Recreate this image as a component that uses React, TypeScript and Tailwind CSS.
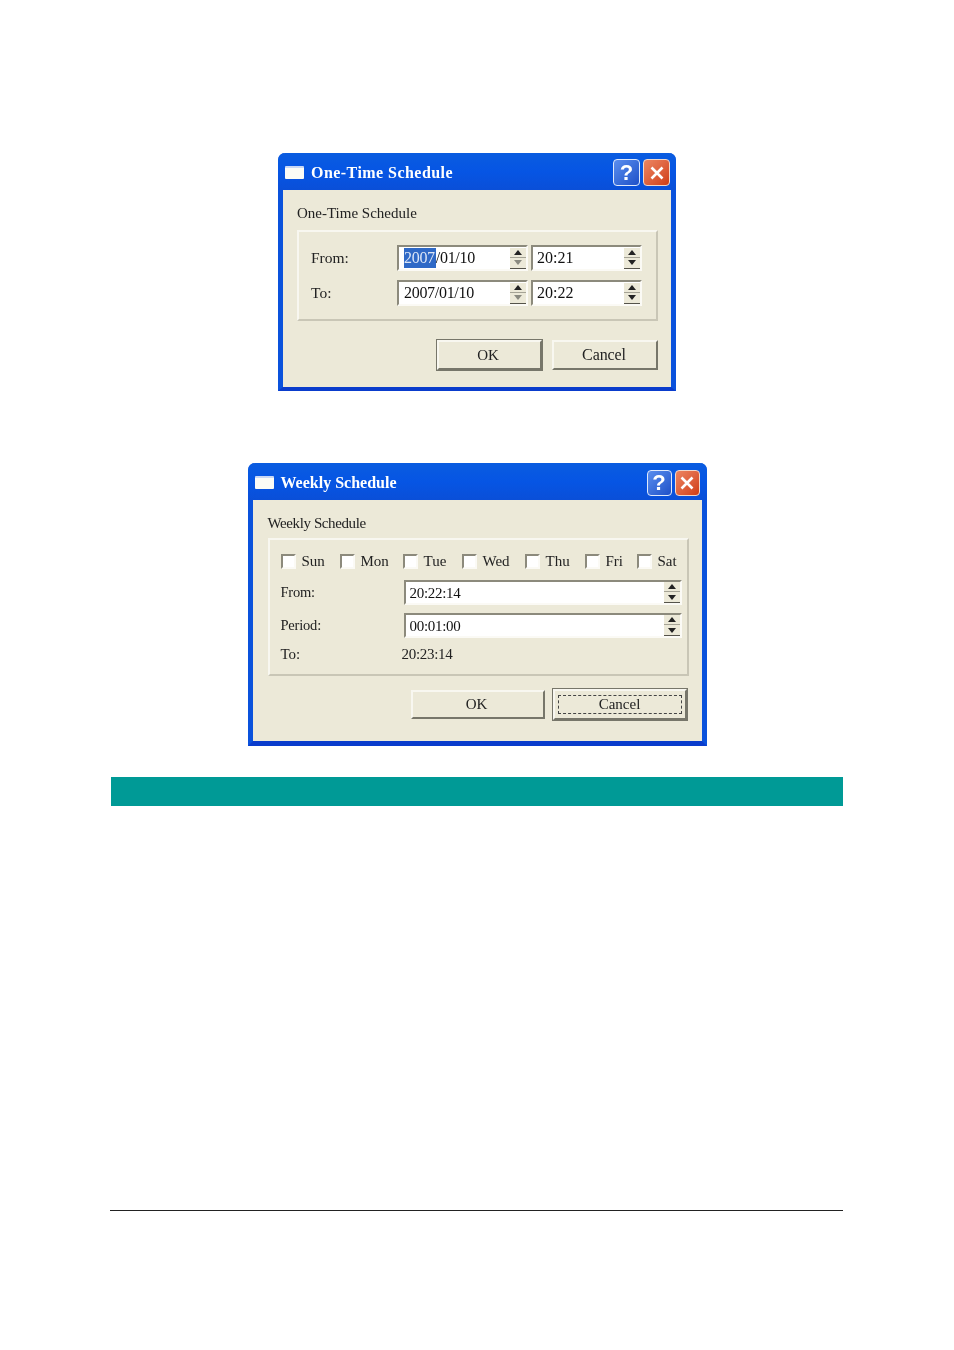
const serif = "font-['Liberation_Serif','Noto_Serif',serif]";

function TitleBar({
  title,
  iconGap,
  titleClass,
  buttonClass,
  barClass,
}: {
  title: string;
  iconGap: string;
  titleClass: string;
  buttonClass: string;
  barClass: string;
}) {
  return (
    <div className={`flex h-[37px] shrink-0 items-center rounded-t-[7px] bg-gradient-to-b from-[#0a5ce0] via-[#0655e4] to-[#0a4fd8] pl-[7px] pt-[2px] ${barClass}`}>
      <div className={`h-[13px] w-[19px] rounded-[1px] border-t-2 border-[#c9d8f5] bg-[#fbfbf6] ${iconGap}`} />
      <span className={`${serif} text-[16px] font-bold text-white ${titleClass}`}>{title}</span>
      <div className="ml-auto flex gap-[3px]">
        <div className={`flex items-center justify-center rounded-[4px] border border-[#dfe9fb] bg-gradient-to-br from-[#5b8eee] to-[#1f50c8] font-['Liberation_Sans',sans-serif] text-[22px] font-bold leading-none text-white ${buttonClass}`}>
          ?
        </div>
        <div className={`flex items-center justify-center rounded-[4px] border border-[#f0d8cc] bg-gradient-to-br from-[#ec8562] to-[#d03c10] ${buttonClass}`}>
          <svg width="16" height="16" viewBox="0 0 16 16">
            <path d="M2.5 2.5 L13.5 13.5 M13.5 2.5 L2.5 13.5" stroke="white" strokeWidth="2.6" />
          </svg>
        </div>
      </div>
    </div>
  );
}

function Spin({ muted }: { muted?: boolean }) {
  return (
    <div className="flex h-[21px] w-[16px] shrink-0 flex-col bg-[#ece9d8]">
      <div className="flex h-[10px] items-center justify-center border-b border-[#a5a395]">
        <div className="h-0 w-0 border-x-[4px] border-b-[5px] border-x-transparent border-b-[#222]" />
      </div>
      <div className="flex h-[11px] items-center justify-center border-b border-[#55534a]">
        <div className={`h-0 w-0 border-x-[4px] border-t-[5px] border-x-transparent ${muted ? "border-t-[#8a8a80]" : "border-t-[#222]"}`} />
      </div>
    </div>
  );
}

function Field({
  selected,
  text,
  width,
  height,
  muted,
  ml,
  textClass,
}: {
  selected?: string;
  text: string;
  width: string;
  height: string;
  muted?: boolean;
  ml?: string;
  textClass: string;
}) {
  return (
    <div className={`flex items-center justify-between border-2 border-b-[#fbfaf5] border-l-[#8c8a7c] border-r-[#fbfaf5] border-t-[#8c8a7c] bg-white ${width} ${height} ${ml ?? ""}`}>
      <span className={`leading-[20px] text-[#111] ${textClass}`}>
        {selected && <span className="inline-block bg-[#2f69c6] pr-px text-[#dce6f6]">{selected}</span>}
        {text}
      </span>
      <Spin muted={muted} />
    </div>
  );
}

function XpButton({ label, className, focus }: { label: string; className: string; focus?: boolean }) {
  return (
    <div className={`flex items-center justify-center border-2 border-b-[#77766a] border-l-[#f8f7f0] border-r-[#77766a] border-t-[#f8f7f0] text-[#222] ${className}`}>
      {focus ? (
        <div className="flex h-[19px] w-[124px] items-center justify-center border border-dashed border-[#444]">{label}</div>
      ) : (
        label
      )}
    </div>
  );
}

function OneTimeDialog() {
  return (
    <div className="flex h-[238px] w-[398px] flex-col rounded-t-[7px] border-x-[5px] border-b-[4px] border-x-[#0a52dc] border-b-[#0a3ccc] bg-[#ece9d8] blur-[0.4px]">
      <div className="-mx-[5px]">
        <TitleBar
          title="One-Time Schedule"
          iconGap="mr-[7px]"
          titleClass="tracking-[0.45px]"
          buttonClass="h-[27px] w-[27px]"
          barClass="pr-[6px]"
        />
      </div>
      <div className="px-[14px] pt-[14px]">
        <div className="h-[18px] text-[15px] leading-[18px] text-[#222]">One-Time Schedule</div>
        <div className="mt-[8px] flex h-[91px] w-[361px] flex-col gap-[9px] border-2 border-b-[#c9c6b6] border-l-[#f8f7f0] border-r-[#c9c6b6] border-t-[#f8f7f0] pl-[12px] pt-[13px]">
          {[
            { label: "From:", selected: "2007", text: "/01/10", time: "20:21" },
            { label: "To:", text: "2007/01/10", time: "20:22" },
          ].map((row) => (
            <div key={row.label} className="flex items-center">
              <span className="w-[86px] text-[15.5px] text-[#222]">{row.label}</span>
              <Field selected={row.selected} text={row.text} width="w-[131px]" height="h-[26px]" muted textClass="pl-[5px] text-[16px] tracking-[-0.3px]" />
              <Field text={row.time} width="w-[111px]" height="h-[26px]" ml="ml-[3px]" textClass="pl-[4px] text-[16px]" />
            </div>
          ))}
        </div>
        <div className="mr-[-1px] mt-[19px] flex items-center justify-end gap-[10px]">
          <XpButton label="OK" className="h-[30px] w-[105px] pr-[3px] text-[15px] outline outline-1 outline-[#77766a]" />
          <XpButton label="Cancel" className="h-[30px] w-[106px] pr-[2px] text-[16px] tracking-[-0.1px]" />
        </div>
      </div>
    </div>
  );
}

const days = [
  { name: "Sun", w: "w-[59px]" },
  { name: "Mon", w: "w-[63px]" },
  { name: "Tue", w: "w-[59px]" },
  { name: "Wed", w: "w-[63px]" },
  { name: "Thu", w: "w-[60px]" },
  { name: "Fri", w: "w-[52px]" },
  { name: "Sat", w: "w-[50px]" },
];

function WeeklyDialog() {
  const timeText = "pl-[4px] text-[15px] tracking-[-0.3px]";
  return (
    <div className="flex h-[283px] w-[459px] flex-col rounded-t-[7px] border-x-[5px] border-b-[5px] border-x-[#0a52dc] border-b-[#0a3ccc] bg-[#ece9d8] blur-[0.4px]">
      <div className="-mx-[5px]">
        <TitleBar
          title="Weekly Schedule"
          iconGap="mr-[7px]"
          titleClass="tracking-[0px]"
          buttonClass="h-[26px] w-[25px]"
          barClass="pr-[7px]"
        />
      </div>
      <div className="px-[15px] pt-[14px]">
        <div className="h-[18px] text-[15px] leading-[18px] tracking-[-0.4px] text-[#222]">Weekly Schedule</div>
        <div className="mt-[6px] h-[138px] w-[421px] border-2 border-b-[#c9c6b6] border-l-[#f8f7f0] border-r-[#c9c6b6] border-t-[#f8f7f0] pl-[11px] pt-[12px]">
          <div className="flex h-[18px] items-center">
            {days.map((d) => (
              <div key={d.name} className={`flex items-center gap-[6px] ${d.w}`}>
                <div className="h-[15px] w-[15px] border-2 border-b-[#fbfaf5] border-l-[#8c8a7c] border-r-[#fbfaf5] border-t-[#8c8a7c] bg-white" />
                <span className="text-[15px] leading-[18px] text-[#222]">{d.name}</span>
              </div>
            ))}
          </div>
          <div className="mt-[10px] flex h-[25px] items-center">
            <span className="w-[123px] text-[14.5px] tracking-[-0.2px] text-[#222]">From:</span>
            <Field text="20:22:14" width="w-[278px]" height="h-[25px]" textClass={timeText} />
          </div>
          <div className="mt-[8px] flex h-[25px] items-center">
            <span className="w-[123px] text-[14.5px] tracking-[-0.2px] text-[#222]">Period:</span>
            <Field text="00:01:00" width="w-[278px]" height="h-[25px]" textClass={timeText} />
          </div>
          <div className="mt-[7px] flex h-[18px] items-center">
            <span className="w-[121px] text-[15px] text-[#222]">To:</span>
            <span className="text-[15px] tracking-[-0.3px] text-[#222]">20:23:14</span>
          </div>
        </div>
        <div className="mt-[13px] flex items-center justify-end gap-[8px]">
          <XpButton label="OK" className="h-[29px] w-[134px] pr-[2px] text-[15px]" />
          <XpButton label="Cancel" className="h-[31px] w-[134px] text-[15px] outline outline-1 outline-[#77766a]" focus />
        </div>
      </div>
    </div>
  );
}

export default function App() {
  return (
    <div className={`${serif} flex h-[1350px] w-[954px] flex-col items-center bg-white pt-[153px]`}>
      <OneTimeDialog />
      <div className="mt-[72px]">
        <WeeklyDialog />
      </div>
      <div className="mt-[31px] h-[29px] w-[732px] bg-[#009a96]" />
      <div className="ml-[110px] mt-[404px] h-px w-[733px] self-start bg-[#222]" />
    </div>
  );
}
